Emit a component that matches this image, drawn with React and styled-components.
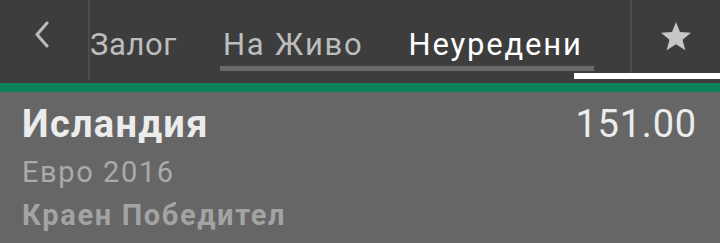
import React from "react";
import styled, { createGlobalStyle } from "styled-components";

const GlobalStyle = createGlobalStyle`
  html, body {
    margin: 0;
    padding: 0;
    background: #666666;
    font-family: Roboto, "Noto Sans", sans-serif;
  }
`;

const Screen = styled.div`
  width: 720px;
  height: 243px;
  overflow: hidden;
  background: #666666;
`;

const Header = styled.header`
  position: relative;
  display: flex;
  height: 83px;
  background: #3d3d3d;
`;

const IconButton = styled.div`
  flex: 0 0 ${p => p.width}px;
  display: flex;
  align-items: ${p => (p.top ? "flex-start" : "center")};
  justify-content: center;
  padding-top: ${p => p.top || 0}px;
  box-sizing: border-box;
  height: ${p => p.lineHeight}px;
  border-${p => p.side}: 2px solid #4c4c4c;
`;

const Tabs = styled.nav`
  flex: 1;
  display: flex;
  overflow: hidden;
  white-space: nowrap;
`;

const Tab = styled.div`
  flex: 0 0 auto;
  margin-left: ${p => p.offset}px;
  padding-top: 27px;
  font-size: 31px;
  letter-spacing: ${p => p.spacing ?? 1.8}px;
  line-height: 36px;
  color: ${p => (p.active ? "#ffffff" : "#bdbdbd")};
`;

const Indicator = styled.div`
  position: absolute;
  left: ${p => p.left}px;
  width: ${p => p.width}px;
  top: ${p => p.top}px;
  height: ${p => p.height}px;
  background: ${p => p.color};
`;

const GreenBar = styled.div`
  height: 9px;
  background: #0d8157;
`;

const Content = styled.section`
  padding: 8px 24px 0 22px;
`;

const Row = styled.div`
  display: flex;
  justify-content: space-between;
  align-items: baseline;
  margin-bottom: 3px;
`;

const Team = styled.div`
  font-size: 38px;
  font-weight: 700;
  letter-spacing: 1.3px;
  line-height: 48px;
  color: #ececec;
`;

const Odds = styled.div`
  font-size: 38px;
  letter-spacing: 0.8px;
  margin-right: -1px;
  line-height: 48px;
  color: #ececec;
`;

const Sub = styled.div`
  font-size: 29px;
  line-height: 43px;
  letter-spacing: ${p => (p.bold ? 1.65 : 1.6)}px;
  font-weight: ${p => (p.bold ? 700 : 400)};
  color: ${p => (p.bold ? "#a3a3a3" : "#aaaaaa")};
`;

const Chevron = () => (
  <svg width="16" height="27" viewBox="0 0 16 27">
    <path d="M13 2 L3 13.5 L13 25" fill="none" stroke="#bcbcbc" strokeWidth="3" strokeLinecap="round" strokeLinejoin="round" />
  </svg>
);

const Star = () => (
  <svg width="32" height="31" viewBox="0 0 24 23">
    <path d="M12 0.6 L15 8.2 L23.2 8.7 L16.9 13.9 L19 21.9 L12 17.4 L5 21.9 L7.1 13.9 L0.8 8.7 L9 8.2 Z" fill="#c6c6c6" />
  </svg>
);

export default function App() {
  return (
    <Screen>
      <GlobalStyle />
      <Header>
        <IconButton width={90} side="right" lineHeight={80}>
          <span style={{ marginTop: -8, marginRight: 4 }}>
            <Chevron />
          </span>
        </IconButton>
        <Tabs>
          <Tab offset={0} spacing={0.6}>Залог</Tab>
          <Tab offset={46}>На Живо</Tab>
          <Tab offset={45} active>Неуредени</Tab>
        </Tabs>
        <IconButton width={90} side="left" lineHeight={73} top={21}>
          <Star />
        </IconButton>
        <Indicator left={220} width={374} top={66} height={5} color="#6a6a6a" />
        <Indicator left={574} width={146} top={73} height={6} color="#ffffff" />
      </Header>
      <GreenBar />
      <Content>
        <Row>
          <Team>Исландия</Team>
          <Odds>151.00</Odds>
        </Row>
        <Sub>Евро 2016</Sub>
        <Sub bold>Краен Победител</Sub>
      </Content>
    </Screen>
  );
}
